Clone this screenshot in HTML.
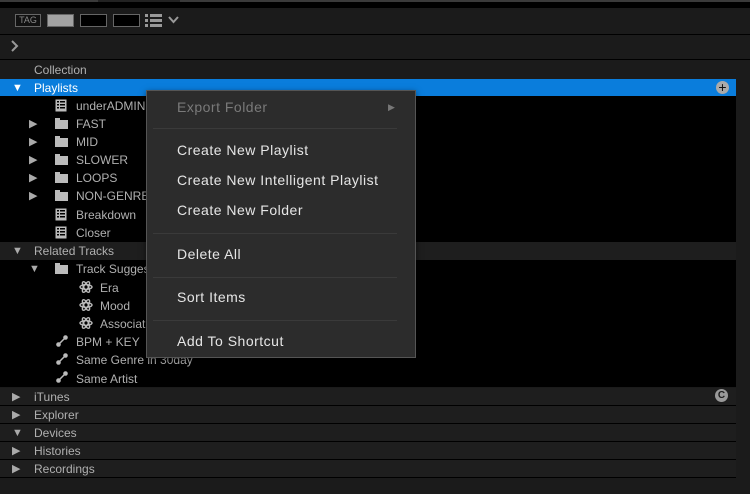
<!DOCTYPE html>
<html><head><meta charset="utf-8"><style>
*{margin:0;padding:0;box-sizing:border-box}
body{width:750px;height:494px;background:#1b1b1b;position:relative;overflow:hidden;font-family:"Liberation Sans",sans-serif;font-size:12px;color:#b0b0b0}
.a{position:absolute}
.t{position:absolute;line-height:18px;white-space:nowrap;margin-top:1px}
.ar{position:absolute;font-size:11px;line-height:18px;color:#aaa;margin-top:1px}
.sec{position:absolute;left:0;width:736px;height:17px;background:#1e1e1e}
.mi{position:absolute;left:30px;font-size:14px;letter-spacing:0.5px;color:#e6e6e6;line-height:20px;white-space:nowrap}
.sep{position:absolute;left:6px;width:244px;height:1px;background:#111;border-bottom:1px solid #3a3a3a}
</style></head><body>
<div class="a" style="left:0;top:0;width:750px;height:2px;background:#3a3a3a"></div>
<div class="a" style="left:98px;top:0;width:82px;height:2px;background:#222"></div>
<div class="a" style="left:0;top:2px;width:750px;height:6px;background:#000"></div>
<div class="a" style="left:15px;top:14px;width:26px;height:13px;border:1px solid #666;background:#111;font-size:9px;color:#888;text-align:center;line-height:11px">TAG</div>
<div class="a" style="left:47px;top:14px;width:27px;height:13px;background:#a2a2a2;border:1px solid #666"></div>
<div class="a" style="left:80px;top:14px;width:27px;height:13px;background:#000;border:1px solid #666"></div>
<div class="a" style="left:113px;top:14px;width:27px;height:13px;background:#000;border:1px solid #666"></div>
<svg class="a" style="left:145px;top:14px" width="40" height="14"><g fill="#999"><rect x="0" y="0" width="3" height="3"/><rect x="0" y="5" width="3" height="3"/><rect x="0" y="10" width="3" height="3"/><rect x="5" y="0" width="12" height="3"/><rect x="5" y="5" width="12" height="3"/><rect x="5" y="10" width="12" height="3"/></g><path d="M24 3 L28.5 8 L33 3" stroke="#999" stroke-width="2" fill="none"/></svg>
<div class="a" style="left:0;top:34px;width:750px;height:1px;background:#000"></div>
<svg class="a" style="left:10px;top:40px" width="10" height="12"><path d="M2 1 L7 6 L2 11" stroke="#999" stroke-width="2" fill="none"/></svg>
<div class="a" style="left:0;top:59px;width:750px;height:1px;background:#000"></div>
<div class="t" style="left:34px;top:60px">Collection</div>
<div class="a" style="left:0;top:79px;width:736px;height:17px;background:#0a7ddc"></div>
<div class="ar" style="left:12px;top:78px;color:#fff">▼</div>
<div class="t" style="left:34px;top:78px;color:#fff">Playlists</div>
<div class="a" style="left:716px;top:81px;width:13px;height:13px;border-radius:50%;background:#aaa;color:#111;font-size:14px;line-height:13px;text-align:center">+</div>
<div class="a" style="left:0;top:96px;width:736px;height:146px;background:#000"></div>
<svg width="0" height="0" style="position:absolute"><defs>
<symbol id="pl" viewBox="0 0 12 13"><rect x="0.5" y="0.5" width="11" height="12" fill="#bbb"/><g fill="#000"><rect x="2" y="2" width="2" height="1.5"/><rect x="5" y="2" width="5" height="1.5"/><rect x="2" y="5" width="2" height="1.5"/><rect x="5" y="5" width="5" height="1.5"/><rect x="2" y="8" width="2" height="1.5"/><rect x="5" y="8" width="5" height="1.5"/></g></symbol>
<symbol id="fd" viewBox="0 0 13 11"><rect x="0" y="2" width="13" height="9" fill="#bbb"/><rect x="0" y="0" width="5" height="3" fill="#bbb"/></symbol>
<symbol id="at" viewBox="0 0 14 14"><g stroke="#bbb" stroke-width="1.4" fill="none"><ellipse cx="7" cy="7" rx="6" ry="2.3"/><ellipse cx="7" cy="7" rx="6" ry="2.3" transform="rotate(60 7 7)"/><ellipse cx="7" cy="7" rx="6" ry="2.3" transform="rotate(-60 7 7)"/></g></symbol>
<symbol id="ln" viewBox="0 0 12 12"><path d="M2.5 9.5 L9.5 2.5" stroke="#bbb" stroke-width="1.5"/><circle cx="2.5" cy="9.5" r="2.3" fill="#bbb"/><circle cx="9.5" cy="2.5" r="2.3" fill="#bbb"/></symbol>
</defs></svg>
<svg class="a" style="left:55px;top:99px" width="12" height="13"><use href="#pl"/></svg><div class="t" style="left:76px;top:96px">underADMIN</div>
<div class="ar" style="left:29px;top:114px">▶</div><svg class="a" style="left:55px;top:118px" width="13" height="11"><use href="#fd"/></svg><div class="t" style="left:76px;top:114px">FAST</div>
<div class="ar" style="left:29px;top:132px">▶</div><svg class="a" style="left:55px;top:136px" width="13" height="11"><use href="#fd"/></svg><div class="t" style="left:76px;top:132px">MID</div>
<div class="ar" style="left:29px;top:150px">▶</div><svg class="a" style="left:55px;top:154px" width="13" height="11"><use href="#fd"/></svg><div class="t" style="left:76px;top:150px">SLOWER</div>
<div class="ar" style="left:29px;top:168px">▶</div><svg class="a" style="left:55px;top:172px" width="13" height="11"><use href="#fd"/></svg><div class="t" style="left:76px;top:168px">LOOPS</div>
<div class="ar" style="left:29px;top:186px">▶</div><svg class="a" style="left:55px;top:190px" width="13" height="11"><use href="#fd"/></svg><div class="t" style="left:76px;top:186px">NON-GENRE</div>
<svg class="a" style="left:55px;top:208px" width="12" height="13"><use href="#pl"/></svg><div class="t" style="left:76px;top:205px">Breakdown</div>
<svg class="a" style="left:55px;top:226px" width="12" height="13"><use href="#pl"/></svg><div class="t" style="left:76px;top:223px">Closer</div>
<div class="a" style="left:0;top:242px;width:736px;height:18px;background:#1e1e1e"></div>
<div class="ar" style="left:12px;top:241px">▼</div><div class="t" style="left:34px;top:241px">Related Tracks</div>
<div class="a" style="left:0;top:260px;width:736px;height:127px;background:#000"></div>
<div class="ar" style="left:29px;top:259px">▼</div><svg class="a" style="left:55px;top:263px" width="13" height="11"><use href="#fd"/></svg><div class="t" style="left:76px;top:259px">Track Suggestions</div>
<svg class="a" style="left:79px;top:280px" width="14" height="14"><use href="#at"/></svg><div class="t" style="left:100px;top:278px">Era</div>
<svg class="a" style="left:79px;top:298px" width="14" height="14"><use href="#at"/></svg><div class="t" style="left:100px;top:296px">Mood</div>
<svg class="a" style="left:79px;top:316px" width="14" height="14"><use href="#at"/></svg><div class="t" style="left:100px;top:314px">Association</div>
<svg class="a" style="left:56px;top:335px" width="12" height="12"><use href="#ln"/></svg><div class="t" style="left:76px;top:332px">BPM + KEY</div>
<svg class="a" style="left:56px;top:353px" width="12" height="12"><use href="#ln"/></svg><div class="t" style="left:76px;top:350px">Same Genre in 30day</div>
<svg class="a" style="left:56px;top:371px" width="12" height="12"><use href="#ln"/></svg><div class="t" style="left:76px;top:369px">Same Artist</div>
<div class="sec" style="top:388px"></div><div class="ar" style="left:12px;top:387px">▶</div><div class="t" style="left:34px;top:387px">iTunes</div>
<div class="a" style="left:715px;top:389px;width:13px;height:13px;border-radius:50%;background:#999;color:#1b1b1b;font-size:10px;font-weight:bold;line-height:13px;text-align:center">C</div>
<div class="sec" style="top:406px"></div><div class="ar" style="left:12px;top:405px">▶</div><div class="t" style="left:34px;top:405px">Explorer</div>
<div class="sec" style="top:424px"></div><div class="ar" style="left:12px;top:423px">▼</div><div class="t" style="left:34px;top:423px">Devices</div>
<div class="sec" style="top:442px"></div><div class="ar" style="left:12px;top:441px">▶</div><div class="t" style="left:34px;top:441px">Histories</div>
<div class="sec" style="top:460px"></div><div class="ar" style="left:12px;top:459px">▶</div><div class="t" style="left:34px;top:459px">Recordings</div>
<div class="a" style="left:0;top:405px;width:736px;height:1px;background:#000"></div>
<div class="a" style="left:0;top:423px;width:736px;height:1px;background:#000"></div>
<div class="a" style="left:0;top:441px;width:736px;height:1px;background:#000"></div>
<div class="a" style="left:0;top:459px;width:736px;height:1px;background:#000"></div>
<div class="a" style="left:0;top:477px;width:736px;height:1px;background:#000"></div>
<div class="a" style="left:146px;top:90px;width:270px;height:268px;background:#2c2c2c;border:1px solid #555;box-shadow:0 2px 6px rgba(0,0,0,.5)">
<div class="mi" style="top:6px;color:#7a7a7a">Export Folder</div>
<div class="a" style="left:241px;top:11px;font-size:9px;color:#777">▶</div>
<div class="sep" style="top:37px"></div>
<div class="mi" style="top:49px">Create New Playlist</div>
<div class="mi" style="top:79px">Create New Intelligent Playlist</div>
<div class="mi" style="top:109px">Create New Folder</div>
<div class="sep" style="top:142px"></div>
<div class="mi" style="top:153px">Delete All</div>
<div class="sep" style="top:186px"></div>
<div class="mi" style="top:196px">Sort Items</div>
<div class="sep" style="top:229px"></div>
<div class="mi" style="top:240px">Add To Shortcut</div>
</div>
</body></html>
